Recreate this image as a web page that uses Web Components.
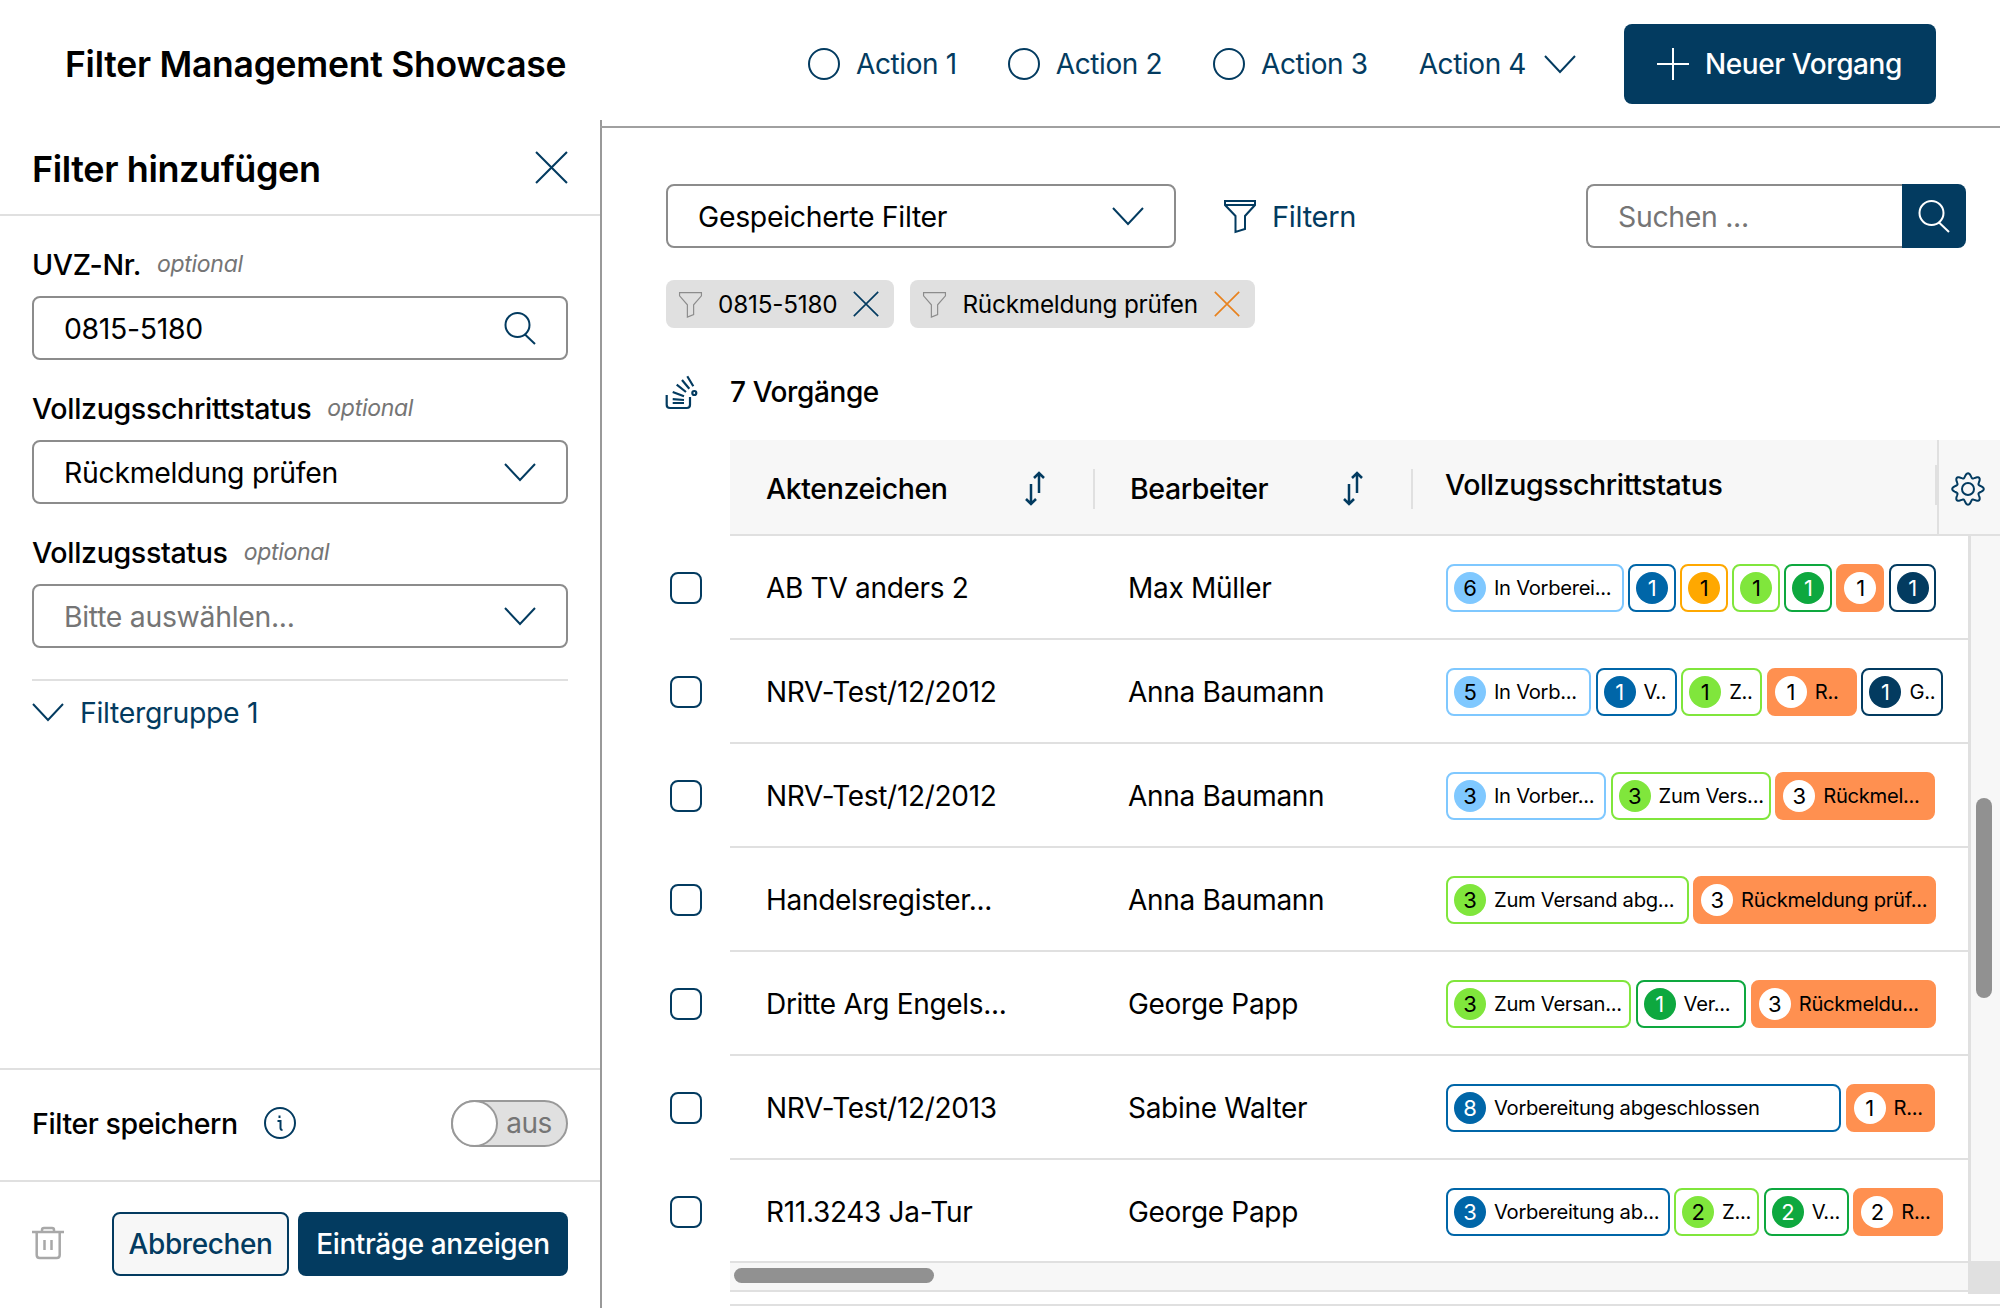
<!doctype html>
<html lang="de">
<head>
<meta charset="utf-8">
<title>Filter Management Showcase</title>
<style>
  html, body { margin: 0; height: 1308px; overflow: hidden; background: #fff; }
  body { font-family: "Inter", "Liberation Sans", sans-serif; color: #000; --navy: #033b60; --line: #e0e0e0; --grey: #8c8c8c; }
</style>
</head>
<body>
<app-page></app-page>

<script>
// wavy outline of the settings gear, 8 teeth
function gearPath() {
  let d = '';
  for (let i = 0; i < 96; i++) {
    const a = i / 96 * Math.PI * 2;
    const r = 13.6 + 2.2 * Math.cos(8 * a);
    d += (i ? 'L' : 'M') + (16 + r * Math.sin(a)).toFixed(2) + ' ' + (16 - r * Math.cos(a)).toFixed(2);
  }
  return d + 'z';
}

// Icon paths, all in a 32x32 box
const ICONS = {
  ring: '<circle cx="16" cy="16" r="15"/>',
  chevron: '<path d="M1 8l15 16L31 8"/>',
  close: '<path d="M1 1l30 30M31 1L1 31"/>',
  plus: '<path d="M16 0v32M0 16h32"/>',
  search: '<circle cx="13.500" cy="13" r="12"/><path d="M21 22.500L31 32"/>',
  funnel: '<path d="M1 1h30v4L21 16v13l-9.500 3V16L1 5z"/><path d="M1 5h30"/>',
  funnelThin: '<path d="M2 2h28v4L20 17v12l-8 3V17L2 6z"/>',
  stack: '<path d="M.7 19v9.700Q.7 32 4 32h16.700q3.300 0 3.300-3.300V21"/><path d="M6.700 27H18M6.700 23.200L18 24M6.700 16L18 20.300M10.700 8.700L20 16M16 4l7.300 8.700M21.300.3l6 10"/><circle cx="28.300" cy="17" r="2"/>',
  sort: '<path d="M11 11v20M6 26l5 5 5-5M19 20V0M14 5l5-5 5 5"/>',
  gear: '<circle cx="16" cy="16" r="6"/><path d="' + gearPath() + '"/>',
  info: '<circle cx="16" cy="16" r="15"/><path d="M13.500 14h3v7q0 2 2 2"/><path d="M15.500 8.500v2.500"/>',
  trash: '<path d="M0 4h32M10 4V2q0-2 2-2h8q2 0 2 2v2M4.700 4v23q0 3 3 3h17q3 0 3-3V4M12.500 12v10M19.500 12v10"/>'
};

class FmIcon extends HTMLElement {
  connectedCallback() {
    const size = this.getAttribute('size') || 32;
    const h = this.getAttribute('h') || size;
    this.attachShadow({ mode: 'open' }).innerHTML = `
      <style>
        :host { display: inline-flex; flex: none; color: var(--navy); }
        svg { display: block; fill: none; stroke: currentColor; stroke-width: ${this.getAttribute('sw') || 2}; overflow: visible; }
      </style>
      <svg width="${size}" height="${h}" viewBox="0 0 32 32" preserveAspectRatio="none">${ICONS[this.getAttribute('name')]}</svg>`;
  }
}
customElements.define('fm-icon', FmIcon);

// 1. Top bar
class AppHeader extends HTMLElement {
  connectedCallback() {
    const action = (n) => `<a><fm-icon name="ring"></fm-icon>Action ${n}</a>`;
    this.attachShadow({ mode: 'open' }).innerHTML = `
      <style>
        :host { display: flex; align-items: center; height: 120px; padding: 8px 64px 0 65px; box-sizing: border-box; }
        h1 { margin: 0 auto 0 0; font-size: 35.500px; font-weight: 600; letter-spacing: -.25px; }
        nav { display: flex; align-items: center; gap: 51px; margin-right: 48px; }
        a { display: flex; align-items: center; gap: 16px; color: var(--navy); font-size: 28px; letter-spacing: -.4px; }
        a.more { gap: 18px; }
        button { display: flex; align-items: center; gap: 16px; height: 80px; padding: 0 34px 0 33px; border: 0; border-radius: 8px; background: var(--navy); color: #fff; font: 500 28px "Inter", sans-serif; letter-spacing: -.4px; }
      </style>
      <h1>Filter Management Showcase</h1>
      <nav>
        ${action(1)}${action(2)}${action(3)}
        <a class="more">Action 4 <fm-icon name="chevron"></fm-icon></a>
      </nav>
      <button><fm-icon name="plus" style="color:#fff"></fm-icon>Neuer Vorgang</button>`;
  }
}
customElements.define('app-header', AppHeader);

// 2. Input-like box used for text fields and selects
class FieldBox extends HTMLElement {
  connectedCallback() {
    this.attachShadow({ mode: 'open' }).innerHTML = `
      <style>
        :host { display: flex; align-items: center; justify-content: space-between; box-sizing: border-box; height: 64px; padding: 0 30px; border: 2px solid var(--grey); border-radius: 8px; background: #fff; font-size: 28.400px; letter-spacing: -.3px; }
        :host([placeholder]) { color: #757575; }
      </style>
      <slot></slot><slot name="icon"></slot>`;
  }
}
customElements.define('field-box', FieldBox);

class FormField extends HTMLElement {
  connectedCallback() {
    this.attachShadow({ mode: 'open' }).innerHTML = `
      <style>
        :host { display: block; }
        .label { display: flex; align-items: center; gap: 16px; box-sizing: border-box; height: 56px; padding-bottom: 8px; font-size: 28.600px; font-weight: 500; letter-spacing: -.35px; }
        i { font-size: 23px; font-weight: 400; color: #757575; letter-spacing: -.3px; }
      </style>
      <div class="label">${this.getAttribute('label')} <i>optional</i></div>
      <slot></slot>`;
  }
}
customElements.define('form-field', FormField);

// 3. Left filter panel
class FilterPanel extends HTMLElement {
  connectedCallback() {
    this.attachShadow({ mode: 'open' }).innerHTML = `
      <style>
        :host { display: flex; flex-direction: column; flex: none; box-sizing: border-box; width: 602px; height: 1188px; border-right: 2px solid #999; }
        .head { display: flex; align-items: center; justify-content: space-between; box-sizing: border-box; height: 96px; padding: 0 32px; border-bottom: 2px solid var(--line); }
        h2 { margin: 0; padding-top: 4px; font-size: 36px; font-weight: 600; letter-spacing: -.4px; }
        .body { flex: 1; display: flex; flex-direction: column; padding: 24px 32px 0; gap: 24px; }
        .group { display: flex; align-items: center; gap: 16px; height: 32px; margin-top: 7px; padding-top: 15px; border-top: 2px solid var(--line); color: var(--navy); font-size: 28.400px; letter-spacing: -.3px; }
        .save { display: flex; align-items: center; box-sizing: border-box; height: 114px; padding: 0 32px 4px; border-top: 2px solid var(--line); border-bottom: 2px solid var(--line); font-size: 28.500px; font-weight: 500; letter-spacing: -.4px; }
        .save fm-icon { margin-left: 26px; }
        .toggle { display: flex; align-items: center; justify-content: flex-end; box-sizing: border-box; width: 117px; height: 47px; margin-left: auto; padding-right: 14px; position: relative; border: 2px solid #999; border-radius: 24px; background: var(--line); color: #757575; font-size: 28px; font-weight: 400; }
        .toggle::before { content: ""; position: absolute; left: -2px; top: -2px; width: 47px; height: 47px; box-sizing: border-box; border: 2px solid #999; border-radius: 50%; background: #fff; }
        .foot { display: flex; align-items: center; box-sizing: border-box; height: 126px; padding: 30px 32px 32px; gap: 9px; }
        .foot fm-icon { margin-right: 39px; color: #a8a8a8; }
        button { height: 64px; box-sizing: border-box; border-radius: 8px; font: 500 28px "Inter", sans-serif; letter-spacing: -.4px; padding: 0; }
        .sec { width: 177px; background: #f7f7f7; border: 2px solid var(--navy); color: var(--navy); }
        .pri { width: 270px; background: var(--navy); border: 0; color: #fff; }
      </style>
      <div class="head"><h2>Filter hinzufügen</h2><fm-icon name="close" size="33"></fm-icon></div>
      <div class="body">
        <form-field label="UVZ-Nr."><field-box>0815-5180<fm-icon slot="icon" name="search"></fm-icon></field-box></form-field>
        <form-field label="Vollzugsschrittstatus"><field-box>Rückmeldung prüfen<fm-icon slot="icon" name="chevron"></fm-icon></field-box></form-field>
        <form-field label="Vollzugsstatus"><field-box placeholder>Bitte auswählen...<fm-icon slot="icon" name="chevron"></fm-icon></field-box></form-field>
        <div class="group"><fm-icon name="chevron"></fm-icon>Filtergruppe 1</div>
      </div>
      <div class="save">Filter speichern<fm-icon name="info"></fm-icon><div class="toggle">aus</div></div>
      <div class="foot"><fm-icon name="trash" sw="2.500"></fm-icon><button class="sec">Abbrechen</button><button class="pri">Einträge anzeigen</button></div>`;
  }
}
customElements.define('filter-panel', FilterPanel);

class FilterChip extends HTMLElement {
  connectedCallback() {
    const tone = this.getAttribute('tone') || 'var(--navy)';
    this.attachShadow({ mode: 'open' }).innerHTML = `
      <style>
        :host { display: flex; align-items: center; box-sizing: border-box; height: 48px; padding: 0 15px 0 12px; border-radius: 8px; background: var(--line); font-size: 24.300px; letter-spacing: -.2px; }
        .t { margin: 0 16px 0 15px; white-space: nowrap; }
      </style>
      <fm-icon name="funnelThin" size="25" h="26" sw="1.500" style="color:#8c8c8c"></fm-icon>
      <span class="t"><slot></slot></span>
      <fm-icon name="close" size="26" style="color:${tone}"></fm-icon>`;
  }
}
customElements.define('filter-chip', FilterChip);

// 4. Toolbar above the table
class TableToolbar extends HTMLElement {
  connectedCallback() {
    this.attachShadow({ mode: 'open' }).innerHTML = `
      <style>
        :host { display: block; }
        .top { display: flex; align-items: center; }
        field-box.saved { width: 510px; }
        .filtern { display: flex; align-items: center; gap: 16px; margin-left: 48px; color: var(--navy); font-size: 29px; letter-spacing: -.3px; }
        .search { display: flex; margin-left: auto; }
        .search field-box { width: 316px; border-radius: 8px 0 0 8px; border-right: 0; }
        .go { display: flex; align-items: center; justify-content: center; width: 64px; height: 64px; background: var(--navy); border-radius: 0 8px 8px 0; }
        .chips { display: flex; gap: 16px; margin-top: 32px; }
        .count { display: flex; align-items: center; gap: 32px; height: 32px; margin-top: 48px; font-size: 28px; font-weight: 500; letter-spacing: -.4px; }
      </style>
      <div class="top">
        <field-box class="saved">Gespeicherte Filter<fm-icon slot="icon" name="chevron"></fm-icon></field-box>
        <div class="filtern"><fm-icon name="funnel"></fm-icon>Filtern</div>
        <div class="search">
          <field-box placeholder>Suchen ...</field-box>
          <div class="go"><fm-icon name="search" style="color:#fff"></fm-icon></div>
        </div>
      </div>
      <div class="chips">
        <filter-chip>0815-5180</filter-chip>
        <filter-chip tone="#e8821e">Rückmeldung prüfen</filter-chip>
      </div>
      <div class="count"><fm-icon name="stack" sw="2.200"></fm-icon>7 Vorgänge</div>`;
  }
}
customElements.define('table-toolbar', TableToolbar);

// 5. Status badge
const TONES = {
  sky:    { c: '#7fc8ff', t: '#000' },
  blue:   { c: '#0066a8', t: '#fff' },
  amber:  { c: '#ffa800', t: '#000' },
  lime:   { c: '#80e63c', t: '#000' },
  green:  { c: '#0ea83f', t: '#fff' },
  navy:   { c: '#033b60', t: '#fff' }
};

class StatusBadge extends HTMLElement {
  connectedCallback() {
    const tone = this.getAttribute('tone');
    const solid = tone === 'coral';
    const t = TONES[tone] || { c: '#fff', t: '#000' };
    const label = this.getAttribute('text');
    this.attachShadow({ mode: 'open' }).innerHTML = `
      <style>
        :host { display: flex; align-items: center; flex: none; box-sizing: border-box; height: 48px; padding: 0 6px; overflow: hidden; border-radius: 8px; border: 2px solid ${solid ? '#ff9050' : t.c}; background: ${solid ? '#ff9050' : '#fff'}; font-size: 20.200px; letter-spacing: -.3px; white-space: nowrap; }
        b { display: flex; align-items: center; justify-content: center; flex: none; width: 32px; height: 32px; border-radius: 50%; background: ${t.c}; color: ${t.t}; font-size: 22px; font-weight: 400; }
        span { margin-left: 8px; }
      </style>
      <b>${this.getAttribute('n')}</b>${label ? `<span>${label}</span>` : ''}`;
    this.style.width = this.getAttribute('w') + 'px';
  }
}
customElements.define('status-badge', StatusBadge);

const ROWS = [
  ['AB TV anders 2', 'Max Müller', [['sky',6,'In Vorberei...',177.500],['blue',1,'',47.500],['amber',1,'',47.500],['lime',1,'',47.500],['green',1,'',47.500],['coral',1,'',47.500],['navy',1,'',47.500]]],
  ['NRV-Test/12/2012', 'Anna Baumann', [['sky',5,'In Vorb...',145],['blue',1,'V..',81],['lime',1,'Z..',81],['coral',1,'R..',90],['navy',1,'G..',81.500]]],
  ['NRV-Test/12/2012', 'Anna Baumann', [['sky',3,'In Vorber...',160],['lime',3,'Zum Vers...',160],['coral',3,'Rückmel...',160]]],
  ['Handelsregister...', 'Anna Baumann', [['lime',3,'Zum Versand abg...',242.500],['coral',3,'Rückmeldung prüf...',242.500]]],
  ['Dritte Arg Engels...', 'George Papp', [['lime',3,'Zum Versan...',185],['green',1,'Ver...',110.500],['coral',3,'Rückmeldu...',185]]],
  ['NRV-Test/12/2013', 'Sabine Walter', [['blue',8,'Vorbereitung abgeschlossen',395],['coral',1,'R...',89.500]]],
  ['R11.3243 Ja-Tur', 'George Papp', [['blue',3,'Vorbereitung ab...',223.500],['lime',2,'Z...',85],['green',2,'V...',85],['coral',2,'R...',90]]]
];

// 6. Table
class ResultTable extends HTMLElement {
  connectedCallback() {
    const rows = ROWS.map(([az, who, badges]) => `
      <div class="row">
        <div class="pick"><div class="check"></div></div>
        <div class="line">
          <div class="cell az">${az}</div>
          <div class="cell who">${who}</div>
          <div class="badges">${badges.map(([tone, n, text, w]) => `<status-badge tone="${tone}" n="${n}" text="${text}" w="${w}"></status-badge>`).join('')}</div>
        </div>
      </div>`).join('');
    this.attachShadow({ mode: 'open' }).innerHTML = `
      <style>
        :host { display: block; margin: 32px -34px 0 0; position: relative; }
        .head { display: flex; align-items: stretch; box-sizing: border-box; height: 96px; margin-left: 64px; background: #f7f7f7; border-bottom: 2px solid var(--line); font-size: 28.500px; font-weight: 500; letter-spacing: -.4px; }
        .h { display: flex; align-items: center; box-sizing: border-box; padding-top: 3px; }
        .h1 { width: 363px; padding-left: 36px; }
        .h2 { width: 316px; padding-left: 35px; }
        .h3 { flex: 1; padding: 0 0 6px 32px; }
        .h fm-icon { margin-left: auto; margin-right: 41px; }
        .sep { width: 2px; height: 40px; align-self: center; margin-top: 4px; background: var(--line); flex: none; }
        .sep.end { margin-top: -4px; }
        .gear { display: flex; align-items: center; width: 63px; border-left: 2px solid var(--line); box-sizing: border-box; padding: 4px 0 0 13px; }
        .rows { margin-right: 32px; height: 725px; overflow: hidden; }
        .row { display: flex; height: 104px; font-size: 28px; letter-spacing: -.3px; }
        .pick { display: flex; align-items: center; flex: none; box-sizing: border-box; width: 64px; padding-left: 4px; }
        .check { width: 32px; height: 32px; box-sizing: border-box; border: 2px solid var(--navy); border-radius: 8px; }
        .line { flex: 1; min-width: 0; display: flex; align-items: center; padding-top: 1px; border-bottom: 2px solid var(--line); }
        .cell { flex: none; box-sizing: border-box; white-space: nowrap; }
        .az { width: 398px; padding-left: 36px; }
        .who { width: 318px; }
        .badges { display: flex; gap: 4.600px; flex: none; }
        .vbar { position: absolute; right: 0; top: 96px; width: 32px; height: 725px; box-sizing: border-box; border-left: 3px solid var(--line); background: #f7f7f7; }
        .vbar div { position: absolute; left: 5px; top: 262px; width: 16px; height: 200px; border-radius: 8px; background: #919191; }
        .hbar { position: relative; box-sizing: border-box; height: 31px; margin-left: 64px; margin-right: 32px; background: #f7f7f7; border-top: 2px solid var(--line); border-bottom: 2px solid var(--line); }
        .hbar div { position: absolute; left: 4px; top: 5px; width: 200px; height: 15px; border-radius: 8px; background: #919191; }
        .hbar::after { content: ""; position: absolute; left: 100%; top: -2px; width: 32px; height: 33px; background: var(--line); }
        .last { height: 12px; margin-left: 64px; border-bottom: 2px solid var(--line); }
      </style>
      <div class="head">
        <div class="h h1">Aktenzeichen<fm-icon name="sort" sw="2.500"></fm-icon></div><div class="sep"></div>
        <div class="h h2">Bearbeiter<fm-icon name="sort" sw="2.500"></fm-icon></div><div class="sep"></div>
        <div class="h h3">Vollzugsschrittstatus</div><div class="sep end"></div>
        <div class="gear"><fm-icon name="gear"></fm-icon></div>
      </div>
      <div class="rows">${rows}</div>
      <div class="vbar"><div></div></div>
      <div class="hbar"><div></div></div>
      <div class="last"></div>`;
  }
}
customElements.define('result-table', ResultTable);

// 7. Page
class AppPage extends HTMLElement {
  connectedCallback() {
    this.attachShadow({ mode: 'open' }).innerHTML = `
      <style>
        :host { display: block; height: 1308px; overflow: hidden; }
        main { display: flex; }
        .content { flex: 1; min-width: 0; box-sizing: border-box; height: 1182px; margin: 6px 0 0 -2px; padding: 56px 34px 0 66px; border-top: 2px solid #a0a0a0; }
      </style>
      <app-header></app-header>
      <main>
        <filter-panel></filter-panel>
        <div class="content">
          <table-toolbar></table-toolbar>
          <result-table></result-table>
        </div>
      </main>`;
  }
}
customElements.define('app-page', AppPage);
</script>
</body>
</html>
